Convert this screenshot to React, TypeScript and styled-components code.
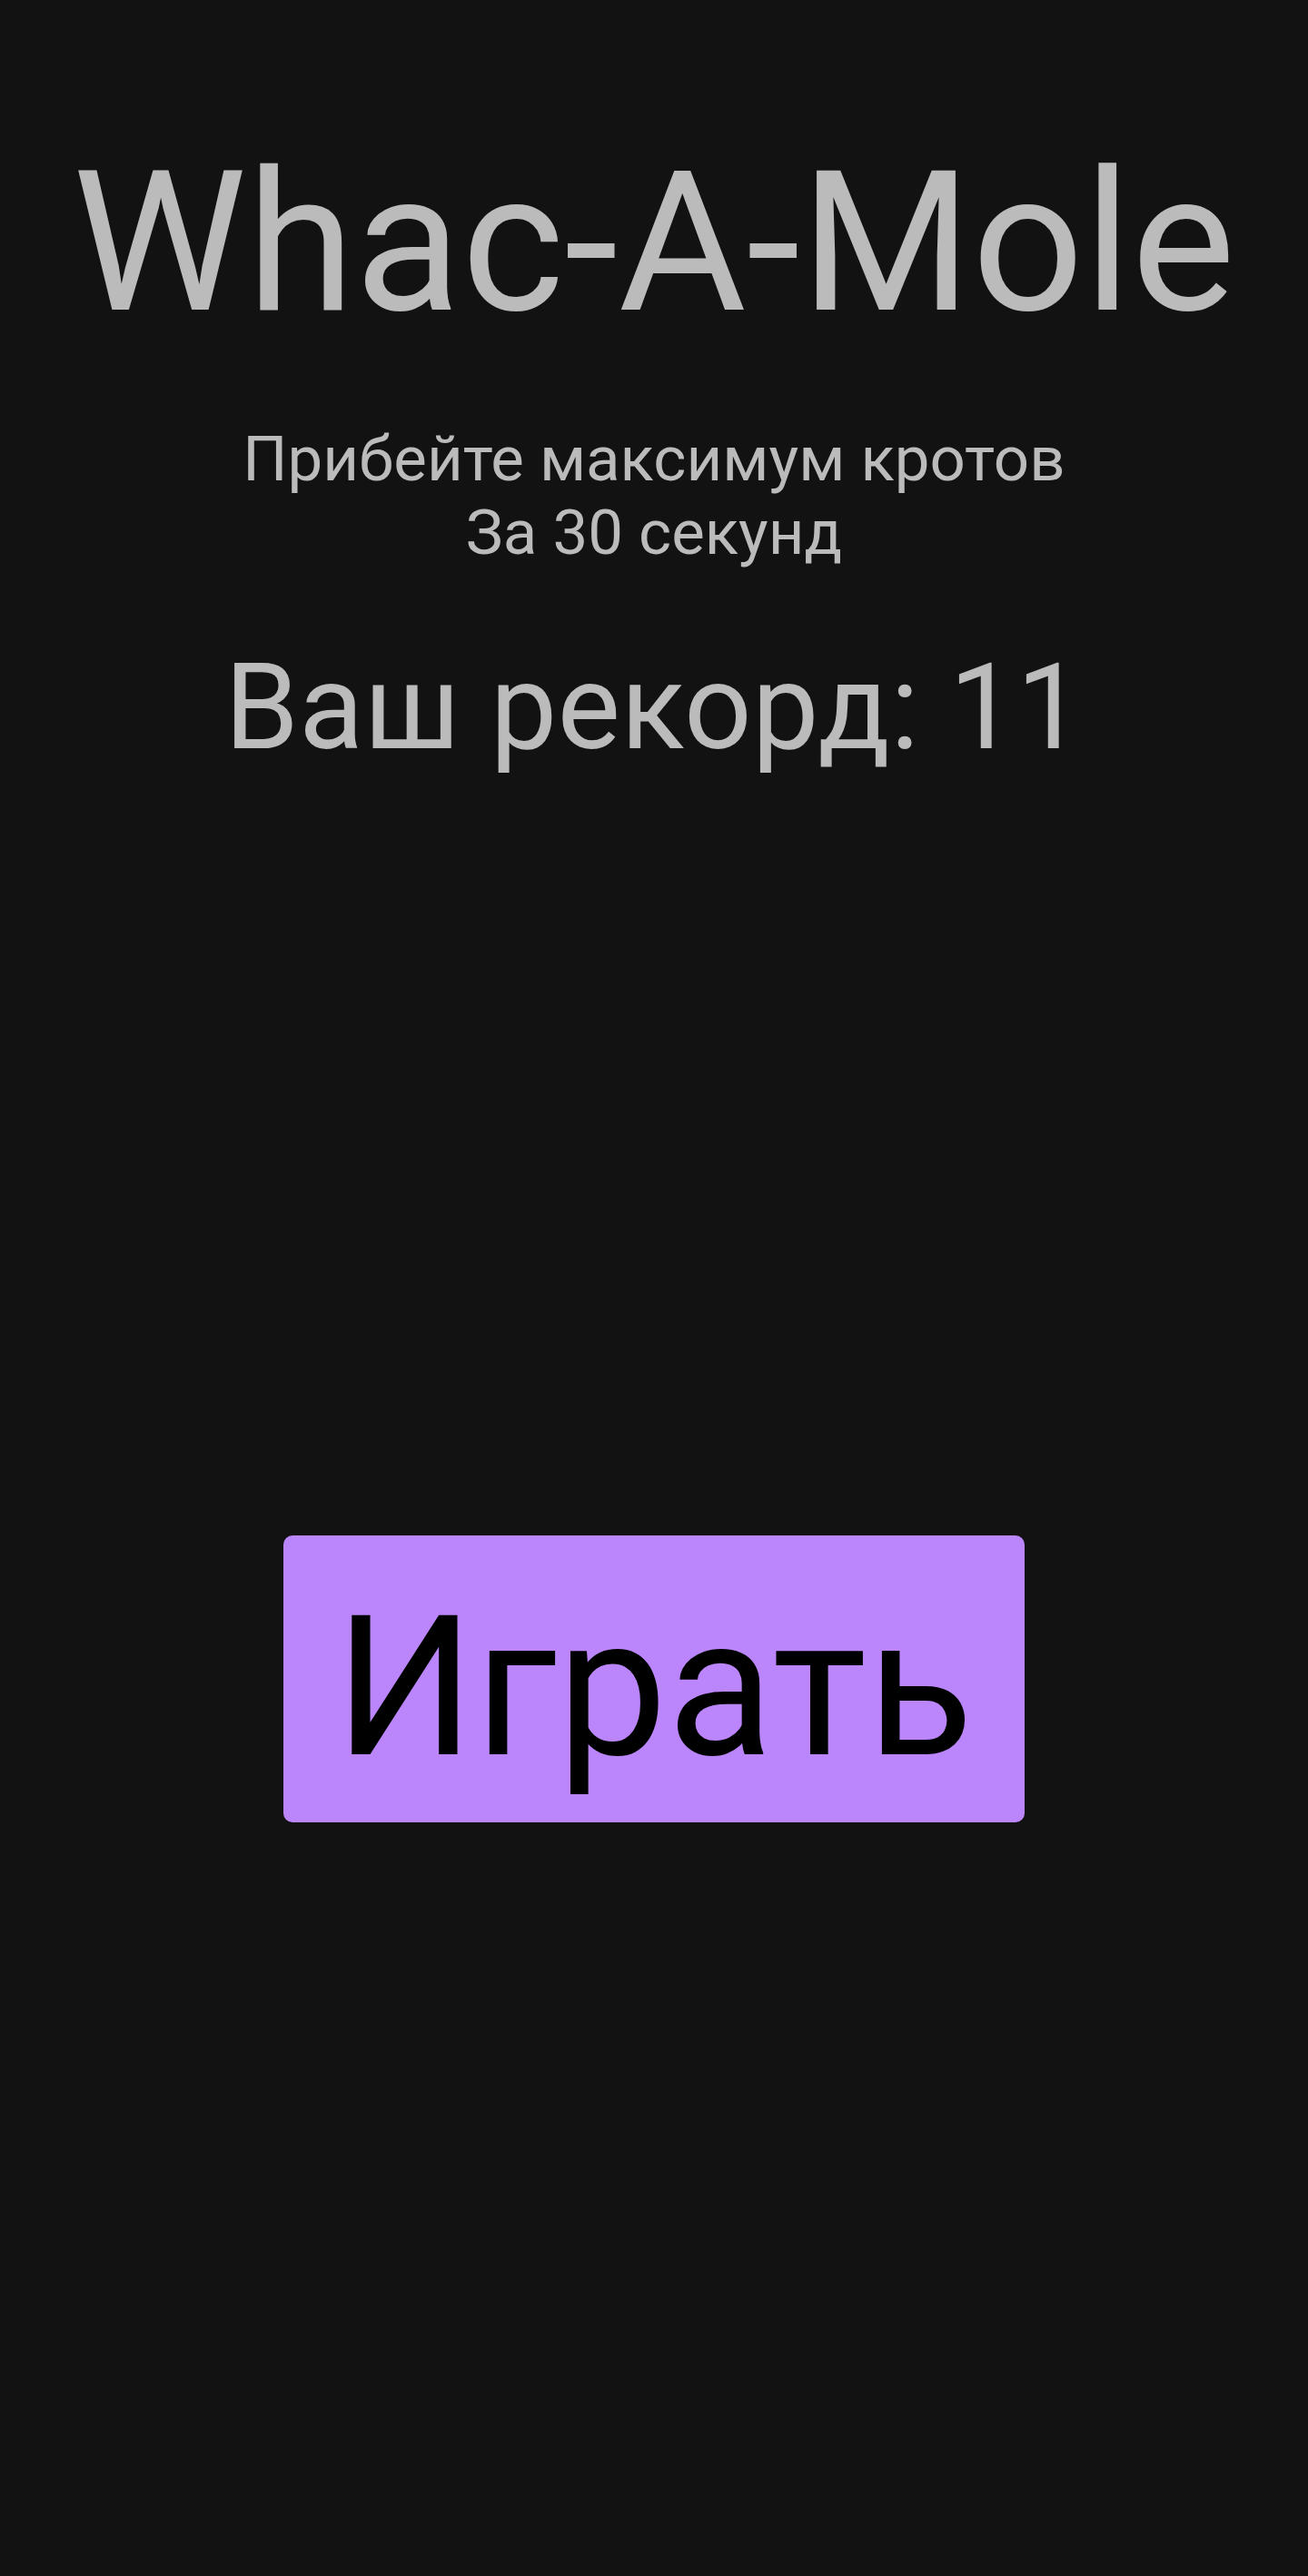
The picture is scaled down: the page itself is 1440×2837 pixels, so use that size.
import React from "react";
import styled, { createGlobalStyle } from "styled-components";

const GlobalStyle = createGlobalStyle`
  html, body {
    margin: 0;
    padding: 0;
    background: #121212;
  }
  body {
    font-family: Roboto, "Liberation Sans", Arial, sans-serif;
    color: #bbbbbb;
  }
  #root {
    min-height: 100vh;
  }
`;

const Page = styled.main`
  min-height: 100vh;
  display: flex;
  flex-direction: column;
  align-items: center;
  text-align: center;
  box-sizing: border-box;
`;

const Title = styled.h1`
  margin: 141px 0 0;
  font-size: 216px;
  font-weight: 400;
  line-height: normal;
  color: #bbbbbb;
`;

const Subtitle = styled.p`
  margin: 71px 0 0;
  font-size: 69px;
  font-weight: 400;
  line-height: normal;
  color: #bbbbbb;
`;

const Record = styled.h2`
  margin: 75px 0 0;
  font-size: 131px;
  font-weight: 400;
  line-height: normal;
  letter-spacing: 0.3px;
  color: #bbbbbb;
`;

const Stage = styled.section`
  flex: 1;
  display: flex;
  align-items: center;
  justify-content: center;
  padding-top: 5px;
`;

const PlayButton = styled.button`
  width: 816px;
  height: 316px;
  box-sizing: border-box;
  padding: 41px 0 22px;
  border: none;
  border-radius: 10px;
  background: #bb86fc;
  color: #000000;
  font-family: Roboto, "Liberation Sans", Arial, sans-serif;
  font-size: 216px;
  font-weight: 400;
  line-height: normal;
  display: flex;
  align-items: flex-start;
  justify-content: center;
  cursor: pointer;
`;

export default function App() {
  return (
    <>
      <GlobalStyle />
      <Page>
        <Title>Whac-A-Mole</Title>
        <Subtitle>
          Прибейте максимум кротов
          <br />
          За 30 секунд
        </Subtitle>
        <Record>Ваш рекорд: 11</Record>
        <Stage>
          <PlayButton>Играть</PlayButton>
        </Stage>
      </Page>
    </>
  );
}
